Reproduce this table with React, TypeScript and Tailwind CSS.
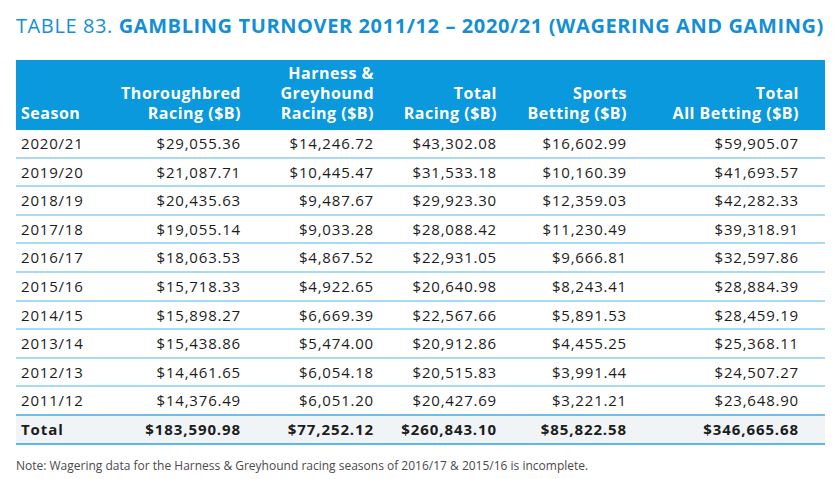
import React from "react";

const rows: string[][] = [
  ["2020/21", "$29,055.36", "$14,246.72", "$43,302.08", "$16,602.99", "$59,905.07"],
  ["2019/20", "$21,087.71", "$10,445.47", "$31,533.18", "$10,160.39", "$41,693.57"],
  ["2018/19", "$20,435.63", "$9,487.67", "$29,923.30", "$12,359.03", "$42,282.33"],
  ["2017/18", "$19,055.14", "$9,033.28", "$28,088.42", "$11,230.49", "$39,318.91"],
  ["2016/17", "$18,063.53", "$4,867.52", "$22,931.05", "$9,666.81", "$32,597.86"],
  ["2015/16", "$15,718.33", "$4,922.65", "$20,640.98", "$8,243.41", "$28,884.39"],
  ["2014/15", "$15,898.27", "$6,669.39", "$22,567.66", "$5,891.53", "$28,459.19"],
  ["2013/14", "$15,438.86", "$5,474.00", "$20,912.86", "$4,455.25", "$25,368.11"],
  ["2012/13", "$14,461.65", "$6,054.18", "$20,515.83", "$3,991.44", "$24,507.27"],
  ["2011/12", "$14,376.49", "$6,051.20", "$20,427.69", "$3,221.21", "$23,648.90"],
];
const total = ["Total", "$183,590.98", "$77,252.12", "$260,843.10", "$85,822.58", "$346,665.68"];

const grid = "grid grid-cols-[94px_131px_133px_123px_130px_172px] pr-[25px]";

export default function App() {
  return (
    <div className="w-[840px] h-[479px] bg-white overflow-hidden" style={{ fontFamily: "'Open Sans', 'Liberation Sans', sans-serif" }}>
      <div className="pl-[16px] pt-[13px] h-[60px] text-[20px] leading-[26px] text-[#138fd6] tracking-[0.6px] whitespace-nowrap">
        <span>TABLE 83. </span>
        <span className="font-bold">GAMBLING TURNOVER 2011/12 – 2020/21 (WAGERING AND GAMING)</span>
      </div>
      <div className="ml-[16px] w-[809px]">
        <div className={`${grid} h-[70px] bg-[#0a99dd] text-white font-bold text-[16px] leading-[20px] tracking-[0.5px] items-end pb-[7px]`}>
          <div className="pl-[5px]">Season</div>
          <div className="text-right">Thoroughbred<br />Racing ($B)</div>
          <div className="text-right">Harness &amp;<br />Greyhound<br />Racing ($B)</div>
          <div className="text-right">Total<br />Racing ($B)</div>
          <div className="text-right">Sports<br />Betting ($B)</div>
          <div className="text-right">Total<br />All Betting ($B)</div>
        </div>
        {rows.map((r, i) => (
          <div
            key={r[0]}
            className={`${grid} h-[28.6px] items-center text-[15px] tracking-[0.8px] text-[#1c1c1c] border-b-2 ${i === rows.length - 1 ? "border-[#6cc0ea]" : "border-[#a9daf3]"}`}
          >
            {r.map((c, j) => (
              <div key={j} className={j === 0 ? "pl-[5px]" : "text-right"}>{c}</div>
            ))}
          </div>
        ))}
        <div className={`${grid} h-[29px] items-center text-[15px] tracking-[0.9px] font-bold text-[#1c1c1c] bg-[#f1f4f7] border-b-2 border-[#5cb9e7]`}>
          {total.map((c, j) => (
            <div key={j} className={j === 0 ? "pl-[5px]" : "text-right"}>{c}</div>
          ))}
        </div>
      </div>
      <div className="pl-[16px] pt-[12px] text-[12px] text-[#4a4a4a]">
        Note: Wagering data for the Harness &amp; Greyhound racing seasons of 2016/17 &amp; 2015/16 is incomplete.
      </div>
    </div>
  );
}
